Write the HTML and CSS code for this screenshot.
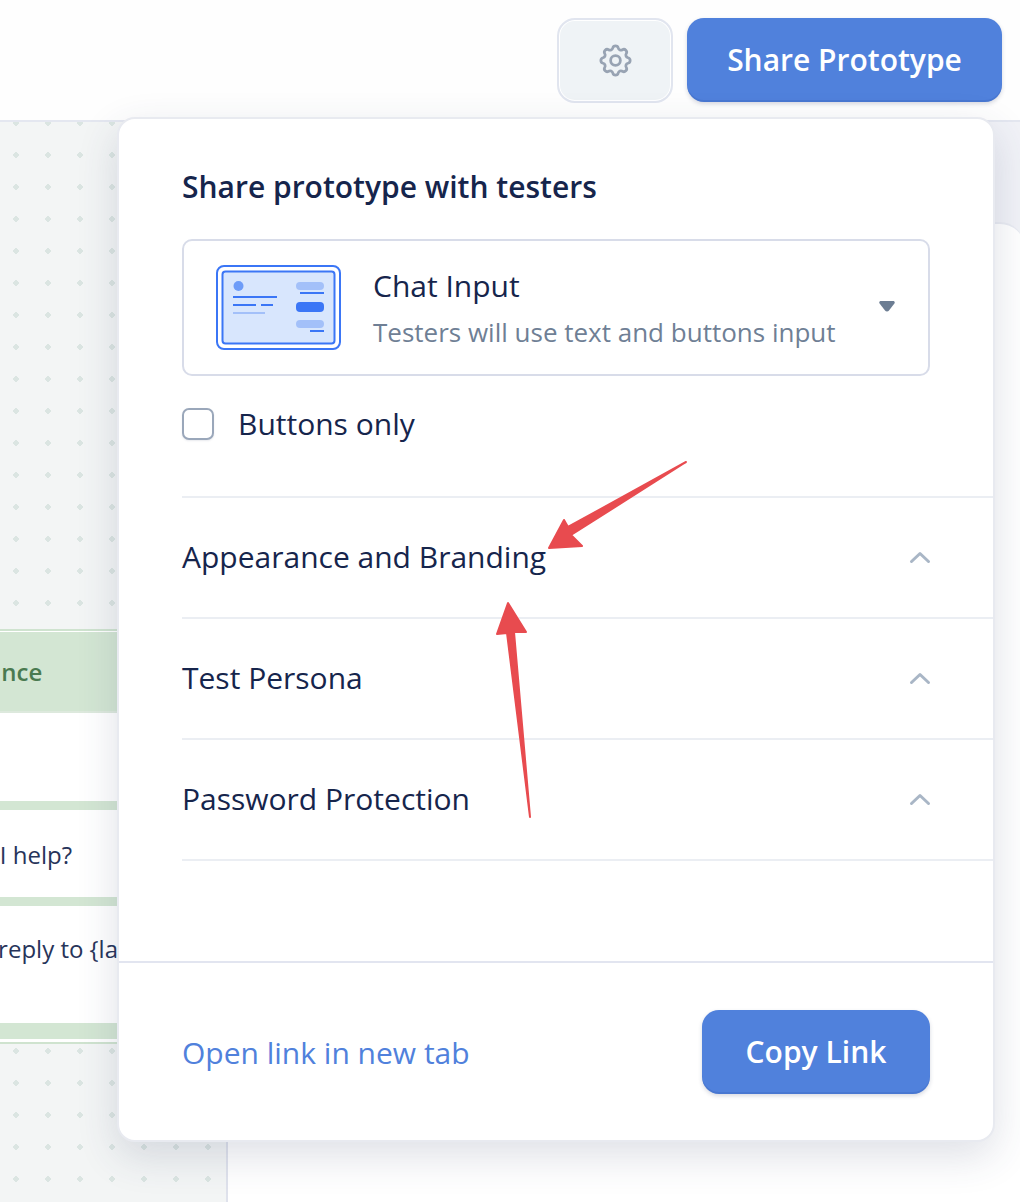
FILE: index.html
```html
<!DOCTYPE html>
<html lang="en">
<head>
<meta charset="utf-8">
<title>Share Prototype</title>
<link rel="stylesheet" href="styles.css">
</head>
<body>
<header class="topbar">
  <button class="settings" aria-label="Settings">
    <svg width="39" height="39" viewBox="0 0 24 24" fill="none" stroke="#98a3b3" stroke-width="1.7" stroke-linecap="round" stroke-linejoin="round">
      <path d="M10.33 4.32c.43-1.76 2.92-1.76 3.35 0a1.72 1.72 0 0 0 2.57 1.07c1.54-.94 3.3.82 2.36 2.37a1.72 1.72 0 0 0 1.07 2.56c1.76.43 1.76 2.93 0 3.36a1.72 1.72 0 0 0-1.07 2.56c.94 1.54-.82 3.3-2.36 2.36a1.72 1.72 0 0 0-2.57 1.07c-.43 1.76-2.92 1.76-3.35 0a1.72 1.72 0 0 0-2.57-1.07c-1.54.94-3.3-.82-2.36-2.36a1.72 1.72 0 0 0-1.07-2.56c-1.76-.43-1.76-2.93 0-3.36a1.72 1.72 0 0 0 1.07-2.56c-.94-1.55.82-3.31 2.36-2.37a1.72 1.72 0 0 0 2.57-1.07Z"/>
      <circle cx="12" cy="12" r="3"/>
    </svg>
  </button>
  <button class="btn share">Share Prototype</button>
</header>

<main class="stage">
  <section class="canvas">
    <div class="node">
      <div class="node-head"><span class="head-text">Guidance</span></div>
      <div class="node-row node-empty"></div>
      <div class="node-row node-help"><span class="help-text">How can I help?</span></div>
      <div class="node-row node-reply"><span class="reply-text">Generate a reply to {last_utterance}</span></div>
      <div class="node-foot"></div>
    </div>
  </section>
  <section class="side"><div class="side-card"></div></section>
</main>

<aside class="popover">
  <div class="pop-main">
    <h2 class="pop-title">Share prototype with testers</h2>
    <div class="select">
      <svg class="thumb" width="125" height="85" viewBox="0 0 125 85" fill="none">
        <rect x="1" y="1" width="123" height="83" rx="7" stroke="#3b76f6" stroke-width="2"/>
        <rect x="6.5" y="6.5" width="112" height="72" rx="3" fill="#d8e6fd" stroke="#3b76f6" stroke-width="2"/>
        <circle cx="22.5" cy="21" r="5" fill="#6d9cf8"/>
        <rect x="17" y="31" width="44" height="2" fill="#3b76f6"/>
        <rect x="17" y="39" width="23" height="2" fill="#3b76f6"/>
        <rect x="45" y="39" width="12" height="2" fill="#3b76f6"/>
        <rect x="17" y="47" width="32" height="2" fill="#a3c0f9"/>
        <rect x="80" y="17" width="28" height="8" rx="4" fill="#a3c0f9"/>
        <rect x="84" y="27" width="24" height="2" fill="#3b76f6"/>
        <rect x="80" y="37" width="28" height="10" rx="4" fill="#3b76f6"/>
        <rect x="80" y="55" width="28" height="8" rx="4" fill="#a3c0f9"/>
        <rect x="94" y="65" width="14" height="2" fill="#3b76f6"/>
      </svg>
      <div class="select-text">
        <div class="select-name">Chat Input</div>
        <div class="select-desc">Testers will use text and buttons input</div>
      </div>
      <svg class="caret" width="16" height="11" viewBox="0 0 16 11"><path d="M2 0h12c1.500 0 2.200 1.200 1.400 2.400L10 9.600a2.600 2.600 0 0 1-4 0L.6 2.400C-.2 1.200.5 0 2 0Z" fill="#6c7d93"/></svg>
    </div>
    <label class="check"><span class="box"></span><span>Buttons only</span></label>
  </div>
  <div class="accordion">
    <div class="acc-row">Appearance and Branding<svg class="chev" width="24" height="14" viewBox="0 0 24 14" fill="none"><path d="M3.500 11.500 12 3.500l8.500 8" stroke="#a9b6c6" stroke-width="3" stroke-linecap="round" stroke-linejoin="round"/></svg></div>
    <div class="acc-row">Test Persona<svg class="chev" width="24" height="14" viewBox="0 0 24 14" fill="none"><path d="M3.500 11.500 12 3.500l8.500 8" stroke="#a9b6c6" stroke-width="3" stroke-linecap="round" stroke-linejoin="round"/></svg></div>
    <div class="acc-row">Password Protection<svg class="chev" width="24" height="14" viewBox="0 0 24 14" fill="none"><path d="M3.500 11.500 12 3.500l8.500 8" stroke="#a9b6c6" stroke-width="3" stroke-linecap="round" stroke-linejoin="round"/></svg></div>
  </div>
  <footer class="pop-foot">
    <a class="open-link" href="#">Open link in new tab</a>
    <button class="btn copy">Copy Link</button>
  </footer>
</aside>

<svg class="arrows" width="1020" height="1202" viewBox="0 0 1020 1202">
  <path d="M686 462 571 535 582 546 549 548 564 520 568 527Z" fill="#e84b4f" stroke="#e84b4f" stroke-width="2" stroke-linejoin="round"/>
  <path d="M530 817 514 632 526 632 508 603 497 634 507 633Z" fill="#e84b4f" stroke="#e84b4f" stroke-width="2" stroke-linejoin="round"/>
</svg>
</body>
</html>
```
FILE: styles.css
```css
* { box-sizing: border-box; }
html, body { margin: 0; padding: 0; }
body {
  width: 1020px;
  height: 1202px;
  overflow: hidden;
  position: relative;
  background: #fff;
  font-family: "Open Sans", "Noto Sans", sans-serif;
  color: #16254c;
}
button { font-family: inherit; cursor: pointer; }

.topbar {
  height: 122px;
  padding: 18px 18px 0 0;
  display: flex;
  justify-content: flex-end;
  align-items: flex-start;
  gap: 14px;
  background: #fefefe;
  border-bottom: 2px solid #e4e7f0;
}
.settings {
  width: 116px;
  height: 85px;
  border: 2px solid #e1e5ef;
  border-radius: 18px;
  background: #eff3f6;
  box-shadow: inset 0 0 0 1px #fff;
  display: flex;
  align-items: center;
  justify-content: center;
  padding: 0;
}
.btn {
  border: 0;
  color: #fff;
  background: #5081dc;
  font-weight: 600;
  box-shadow: inset 0 -2px 0 rgba(40, 80, 160, .18), 0 2px 4px rgba(40, 50, 90, .18);
}
.share {
  width: 315px;
  height: 84px;
  padding: 0 0 2px;
  border-radius: 17px;
  font-size: 30px;
}

.stage { display: flex; height: 1080px; }
.canvas {
  flex: none;
  width: 228px;
  border-right: 2px solid #dfe2ec;
  background-color: #f3f5f5;
  background-image: radial-gradient(circle at 16px 16px, #dbe5e2 0, #dbe5e2 2.6px, transparent 2.8px);
  background-size: 32px 32px;
  background-position: 0 -15px;
  position: relative;
  overflow: hidden;
}
.node {
  position: absolute;
  left: 0;
  right: 0;
  top: 507px;
  background: #fff;
  border-top: 2px solid #cfe3cf;
  border-bottom: 2px solid #cfe3cf;
}
.node-head {
  margin-top: 1px;
  height: 81px;
  line-height: 80px;
  background: #d3e6d3;
  color: #4a7a50;
  font-size: 24px;
  font-weight: 600;
  border-bottom: 2px solid #dde9dd;
  white-space: nowrap;
}
.head-text { margin-left: -67px; }
.node-row { background: #fff; border-top: 9px solid #d3e6d3; font-size: 24px; color: #27345a; white-space: nowrap; overflow: hidden; }
.node-empty { height: 88px; border-top: 0; }
.node-help { height: 96px; line-height: 90px; }
.help-text { margin-left: -103px; }
.node-reply { height: 126px; line-height: 86px; }
.reply-text { margin-left: -132px; }
.node-foot { height: 16px; background: #d3e6d3; margin-bottom: 3px; }

.side { flex: 1; padding-top: 100px; background: #f1f2f7; }
.side-card { height: 980px; margin-right: -4px; border-radius: 0 24px 0 0; border-top: 2px solid #e9ebf2; background: #fff; }

.popover {
  position: absolute;
  left: 117px;
  top: 117px;
  width: 878px;
  height: 1025px;
  background: #fff;
  border: 2px solid #e8eaf0;
  border-radius: 18px;
  box-shadow: 0 14px 40px rgba(50, 60, 100, .16);
  display: flex;
  flex-direction: column;
}
.pop-main { padding: 50px 63px 0 63px; }
.pop-title { margin: 0; font-size: 30px; font-weight: 600; line-height: 36px; color: #16254c; }
.select {
  margin-top: 34px;
  height: 137px;
  border: 2px solid #d8dce9;
  border-radius: 10px;
  display: flex;
  align-items: center;
  padding-left: 32px;
  padding-right: 33px;
}
.thumb { flex: none; }
.select-text { margin-left: 32px; flex: 1; }
.select-name { font-size: 30px; line-height: 40px; }
.select-desc { font-size: 26px; line-height: 36px; margin-top: 8px; color: #6f7f95; }
.caret { flex: none; margin-bottom: 2px; }
.check { display: flex; align-items: center; gap: 24px; margin-top: 28px; font-size: 30px; line-height: 40px; }
.box { width: 32px; height: 32px; border: 2px solid #9aa7ba; border-radius: 7px; background: #fff; box-shadow: 0 1px 2px rgba(40,50,90,.1); }

.accordion { margin: 52px 0 0 63px; }
.acc-row {
  height: 121px;
  border-top: 2px solid #ebeef3;
  display: flex;
  align-items: center;
  justify-content: space-between;
  padding: 0 61px 2px 0;
  font-size: 30px;
}
.acc-row:last-child { height: 123px; border-bottom: 2px solid #ebeef3; padding-bottom: 2px; }
.chev { flex: none; }

.pop-foot {
  margin-top: auto;
  height: 179px;
  padding: 2px 63px 0;
  border-top: 2px solid #e2e5f0;
  display: flex;
  align-items: center;
  justify-content: space-between;
}
.open-link { font-size: 30px; color: #5081dc; text-decoration: none; }
.copy { width: 228px; height: 84px; margin-top: -2px; padding: 0; border-radius: 17px; font-size: 30px; }

.arrows { position: absolute; left: 0; top: 0; pointer-events: none; }
```
